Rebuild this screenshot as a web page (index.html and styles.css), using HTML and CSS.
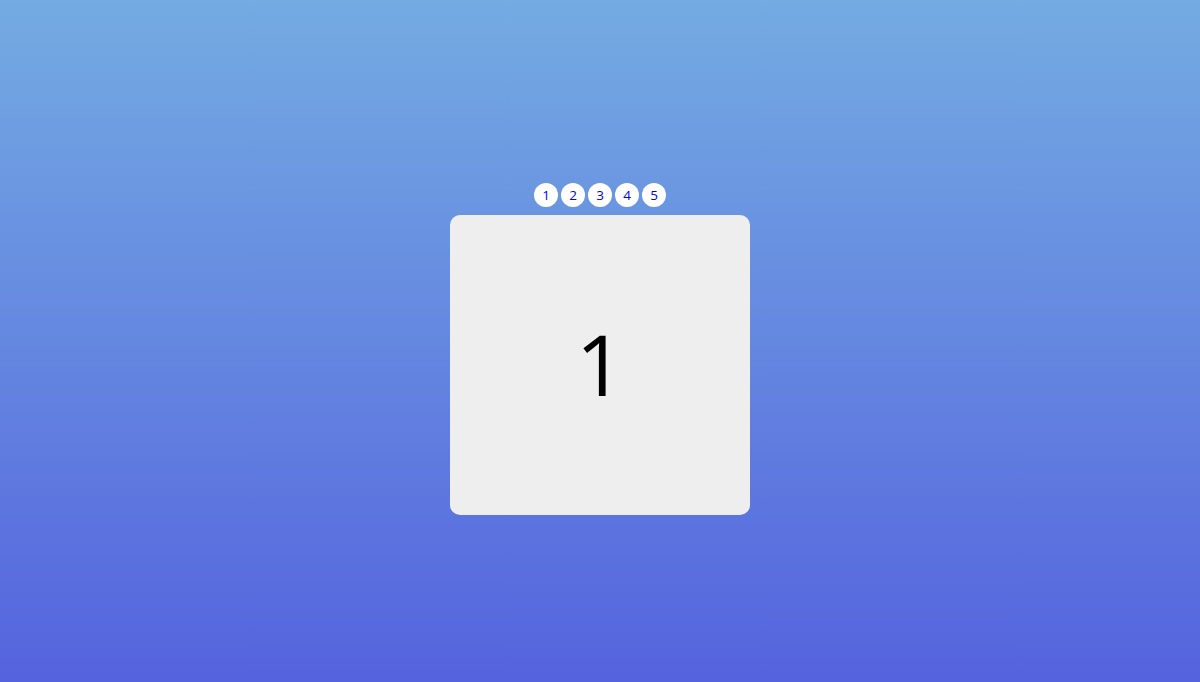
FILE: index.html
```html
<!DOCTYPE html>
<html>
<head>
<meta charset="utf-8">
<link rel="stylesheet" href="styles.css">
</head>
<body>
<div class="wrap">
  <div class="dots">
    <span class="dot">1</span>
    <span class="dot">2</span>
    <span class="dot">3</span>
    <span class="dot">4</span>
    <span class="dot">5</span>
  </div>
  <div class="card">1</div>
</div>
</body>
</html>
```
FILE: styles.css
```css
html, body {
  margin: 0;
  height: 100%;
}
body {
  background: linear-gradient(to bottom, #74abe2, #5563de);
  font-family: "Open Sans", "Noto Sans", sans-serif;
}
.wrap {
  display: flex;
  flex-direction: column;
  align-items: center;
  padding-top: 183px;
}
.dots {
  display: flex;
  gap: 3px;
  margin-bottom: 8px;
}
.dot {
  width: 24px;
  height: 24px;
  border-radius: 50%;
  background: #fff;
  color: #0000ee;
  font-size: 13.5px;
  display: flex;
  align-items: center;
  justify-content: center;
}
.card {
  width: 300px;
  height: 300px;
  box-sizing: border-box;
  padding-bottom: 4px;
  border-radius: 10px;
  background: #eeeeee;
  display: flex;
  align-items: center;
  justify-content: center;
  font-size: 85px;
  font-weight: 500;
  color: #000;
}
```
